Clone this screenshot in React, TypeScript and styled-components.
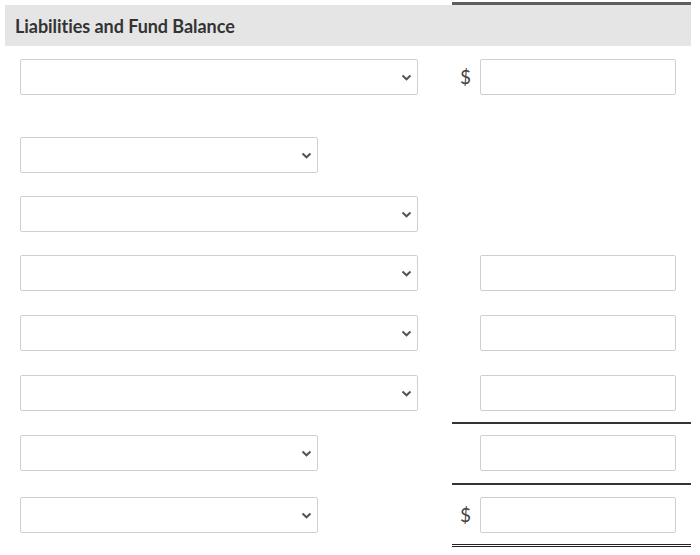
import { FC } from 'react';
import styled, { createGlobalStyle } from 'styled-components';

const GlobalStyle = createGlobalStyle`
    body {
        margin: 0;
        background: #fff;
        font-family: Lato, 'Open Sans', sans-serif;
        color: #333;
    }
`;

const Sheet = styled.div`
    display: grid;
    grid-template-columns: 447px 239px;
    margin-left: 5px;
    padding-top: 2px;
`;

const HeadLabel = styled.div`
    height: 41px;
    border-top: 3px solid #fff;
    background: #e5e5e5;
    display: flex;
    align-items: center;
    padding-left: 10px;
    font-size: 18px;
    font-weight: 700;
    color: #333;
    letter-spacing: -0.05px;
`;

const HeadAmount = styled.div`
    height: 41px;
    border-top: 3px solid #5e5e5e;
    background: #e5e5e5;
`;

const LabelCell = styled.div<{ $top: number; $bottom: number }>`
    padding: ${(p) => 13 + p.$top}px 0 ${(p) => 11 + p.$bottom}px 15px;
    display: flex;
    align-items: flex-start;
`;

type Rule = 'single' | undefined;

const AmountCell = styled.div<{ $rule?: Rule; $total?: boolean; $top: number; $bottom: number }>`
    display: flex;
    align-items: flex-start;
    padding: ${(p) => (p.$rule ? 11 : 13) + p.$top}px 14px ${(p) => (p.$total ? 11 : 11 + p.$bottom)}px 8px;
    border-top: ${(p) => (p.$rule ? '2px solid #333' : 'none')};
    border-bottom: ${(p) => (p.$total ? '3px double #222' : 'none')};
`;

const Dollar = styled.span`
    width: 20px;
    height: 36px;
    line-height: 36px;
    font-size: 19px;
    color: #444;
    text-align: left;
`;

const Field = styled.input`
    box-sizing: border-box;
    width: 196px;
    height: 36px;
    margin: 0;
    border: 1px solid #cfcfcf;
    border-radius: 2px;
    background: #fff;
    outline: none;
`;

const SelectWrap = styled.div<{ $wide: boolean }>`
    position: relative;
    width: ${(p) => (p.$wide ? 398 : 298)}px;
    height: 36px;
`;

const Select = styled.select`
    box-sizing: border-box;
    appearance: none;
    width: 100%;
    height: 100%;
    margin: 0;
    border: 1px solid #cfcfcf;
    border-radius: 2px;
    background: #fff;
    outline: none;
`;

const Chevron = styled.svg`
    position: absolute;
    right: 6px;
    top: 15px;
    width: 11px;
    height: 7px;
    pointer-events: none;
`;

interface IRow {
    wide: boolean;
    dollar?: boolean;
    amount?: boolean;
    rule?: Rule;
    total?: boolean;
    top?: number;
    bottom?: number;
}

const rows: IRow[] = [
    { wide: true, dollar: true, amount: true, bottom: 18 },
    { wide: false, bottom: -1 },
    { wide: true, bottom: -1 },
    { wide: true, amount: true },
    { wide: true, amount: true },
    { wide: true, amount: true },
    { wide: false, amount: true, rule: 'single', bottom: 1 },
    { wide: false, dollar: true, amount: true, rule: 'single', total: true, top: 1 },
];

const Row: FC<IRow> = ({ wide, dollar, amount, rule, total, top = 0, bottom = 0 }) => (
    <>
        <LabelCell $top={top} $bottom={bottom}>
            <SelectWrap $wide={wide}>
                <Select defaultValue="">
                    <option value=""></option>
                </Select>
                <Chevron viewBox="0 0 11 7">
                    <path d="M1.5 1.5 L5.5 5.3 L9.5 1.5" fill="none" stroke="#555" strokeWidth="2" />
                </Chevron>
            </SelectWrap>
        </LabelCell>
        <AmountCell $rule={rule} $total={total} $top={top} $bottom={bottom}>
            <Dollar>{dollar ? '$' : ''}</Dollar>
            {amount && <Field type="text" />}
        </AmountCell>
    </>
);

const App: FC = () => (
    <>
        <GlobalStyle />
        <Sheet>
            <HeadLabel>Liabilities and Fund Balance</HeadLabel>
            <HeadAmount />
            {rows.map((row, i) => (
                <Row key={i} {...row} />
            ))}
        </Sheet>
    </>
);

export default App;
